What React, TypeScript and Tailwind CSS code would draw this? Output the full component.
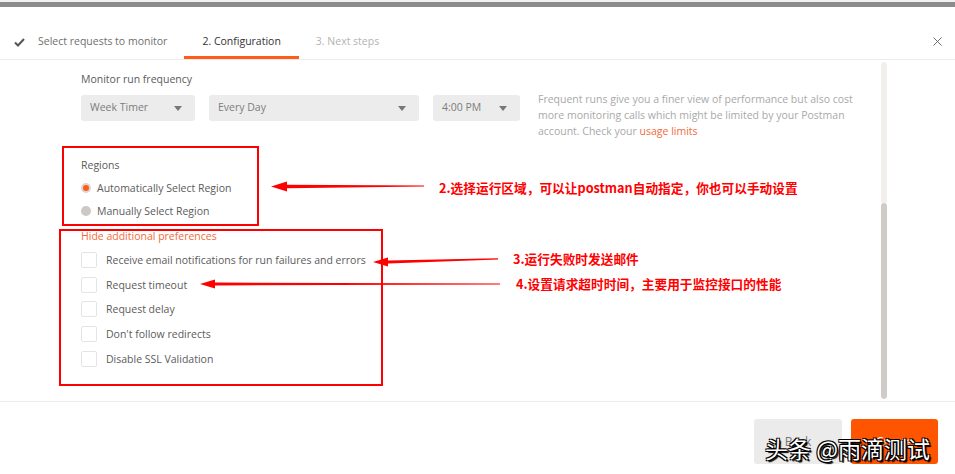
import { X } from "lucide-react";

const font = "font-['Open_Sans','Liberation_Sans',sans-serif]";
const cjk = "font-['Noto_Sans_CJK_SC',sans-serif]";

const prefs = [
  "Receive email notifications for run failures and errors",
  "Request timeout",
  "Request delay",
  "Don't follow redirects",
  "Disable SSL Validation",
];

type SelectProps = {
  label: string;
  width: string;
};

function Caret() {
  return (
    <svg width="8" height="5" viewBox="0 0 8 5">
      <path d="M0 0 L8 0 L4 5 Z" fill="#777" />
    </svg>
  );
}

function FakeSelect({ label, width }: SelectProps) {
  return (
    <div className={`${width} h-[26px] rounded-[3px] bg-[#ececec] flex items-center justify-between pl-[9px] pr-[13px] text-[10.5px] text-[#7d7d7d]`}>
      <span>{label}</span>
      <Caret />
    </div>
  );
}

function Tabs() {
  return (
    <div className="h-[53px] flex items-end border-b border-[#ececec]">
      <div className="flex items-center pl-[14px] pr-[17px] pb-[6px] border-b-[3px] border-transparent text-[10.5px] text-[#6f6f6f]">
        <svg width="11" height="9" viewBox="0 0 11 9" className="mr-[13px]">
          <path d="M1 4.5 L4 7.5 L10 1" stroke="#555" strokeWidth="2" fill="none" />
        </svg>
        Select requests to monitor
      </div>
      <div className="px-[18px] pb-[6px] border-b-[3px] border-[#ff5c1a] text-[10.5px] text-[#333]">
        2. Configuration
      </div>
      <div className="px-[17px] pb-[6px] border-b-[3px] border-transparent text-[10.5px] text-[#b3b3b3]">
        3. Next steps
      </div>
      <div className="ml-auto mr-[10px] mb-[10px] text-[#707070]">
        <X size={15} strokeWidth={1.6} />
      </div>
    </div>
  );
}

function Arrow({ d }: { d: string }) {
  return <path d={d} fill="#ff0000" />;
}

export default function App() {
  return (
    <div className={`${font} relative w-[955px] h-[474px] overflow-hidden bg-white`}>
      <div className="h-[2px] bg-[#f2f2f2]" />
      <div className="h-[5px] bg-[#8c8c8c]" />
      <Tabs />

      <div className="flex h-[341px]">
        <div className="flex-1 pl-[81px] pt-[11px]">
          <div className="text-[10.5px] text-[#5b5b5b] leading-[16px]">Monitor run frequency</div>
          <div className="flex items-start mt-[8px]">
            <FakeSelect label="Week Timer" width="w-[114px]" />
            <div className="w-[14px]" />
            <FakeSelect label="Every Day" width="w-[210px]" />
            <div className="w-[14px]" />
            <FakeSelect label="4:00 PM" width="w-[87px]" />
            <p className="ml-[18px] -mt-[4px] w-[330px] text-[10.5px] leading-[16px] text-[#a9a9a9]">
              Frequent runs give you a finer view of performance but also cost more monitoring calls which might be limited by your Postman account. Check your{" "}
              <span className="text-[#f26b3a]">usage limits</span>
            </p>
          </div>

          <div className="mt-[18px] text-[10.5px] text-[#5b5b5b] leading-[16px]">Regions</div>
          <div className="flex flex-col gap-[7px] mt-[7px] text-[10.5px] text-[#5b5b5b] leading-[16px]">
            <div className="flex items-center">
              <span className="w-[10px] h-[10px] rounded-full bg-[#d9d6d3] flex items-center justify-center">
                <span className="w-[6px] h-[6px] rounded-full bg-[#ff5c1a]" />
              </span>
              <span className="ml-[6px]">Automatically Select Region</span>
            </div>
            <div className="flex items-center">
              <span className="w-[10px] h-[10px] rounded-full bg-[#cbc8c5]" />
              <span className="ml-[6px]">Manually Select Region</span>
            </div>
          </div>

          <div className="mt-[9px] text-[10.5px] text-[#f26b3a] leading-[16px]">Hide additional preferences</div>
          <div className="flex flex-col gap-[8.7px] mt-[8px]">
            {prefs.map((p) => (
              <div key={p} className="flex items-center text-[10.5px] text-[#5b5b5b] leading-[16px]">
                <span className="w-[16px] h-[16px] rounded-[2px] border border-[#e4e4e4] bg-white" />
                <span className="ml-[9px]">{p}</span>
              </div>
            ))}
          </div>
        </div>

        <div className="w-[6px] mr-[68px] my-[2px] flex flex-col rounded-full overflow-hidden">
          <div className="h-[141px] bg-[#f1f0ef]" />
          <div className="flex-1 bg-[#cfcbc7] rounded-full" />
        </div>
      </div>

      <div className="border-t border-[#ececec] h-[73px] flex justify-end items-start pt-[17px] pr-[17px] gap-[9px]">
        <button className="w-[88px] h-[45px] rounded-[3px] bg-[#ebebeb] text-[12px] text-[#777]">Back</button>
        <button className="w-[87px] h-[45px] rounded-[3px] bg-[#ff5500] text-[12px] text-white">Create</button>
      </div>

      {/* annotations */}
      <div className="absolute left-[62px] top-[146px] w-[197px] h-[80px] border-2 border-[#ff0000]" />
      <div className="absolute left-[59px] top-[229px] w-[324px] h-[157px] border-2 border-[#ff0000]" />

      <svg className="absolute left-0 top-0" width="955" height="474">
        <Arrow d="M271 186.5 L287 181.5 L287 184.8 L424 185.6 L424 186.6 L287 188.2 L287 191.5 Z" />
        <Arrow d="M373 262 L388 257.5 L388 260.5 L498 258.3 L498 259.5 L388 263.6 L388 266.5 Z" />
        <Arrow d="M200 284 L215 279.5 L215 282.5 L500 283.5 L500 284.5 L215 285.5 L215 288.5 Z" />
      </svg>

      <div className={`${cjk} absolute left-[439px] top-[179px] text-[12.7px] font-bold text-[#ff0000] leading-[18px]`}>
        2.选择运行区域，可以让postman自动指定，你也可以手动设置
      </div>
      <div className={`${cjk} absolute left-[513px] top-[250px] text-[12.7px] font-bold text-[#ff0000] leading-[18px]`}>
        3.运行失败时发送邮件
      </div>
      <div className={`${cjk} absolute left-[516px] top-[275px] text-[12.7px] font-bold text-[#ff0000] leading-[18px]`}>
        4.设置请求超时时间，主要用于监控接口的性能
      </div>

      <div
        className={`${cjk} absolute left-[765px] top-[433px] text-[23px] leading-[30px] text-white [text-shadow:1px_1px_0_#000,-1px_-1px_0_#000,1px_-1px_0_#000,-1px_1px_0_#000,2px_2px_1px_#000]`}
      >
        头条 @雨滴测试
      </div>
    </div>
  );
}
